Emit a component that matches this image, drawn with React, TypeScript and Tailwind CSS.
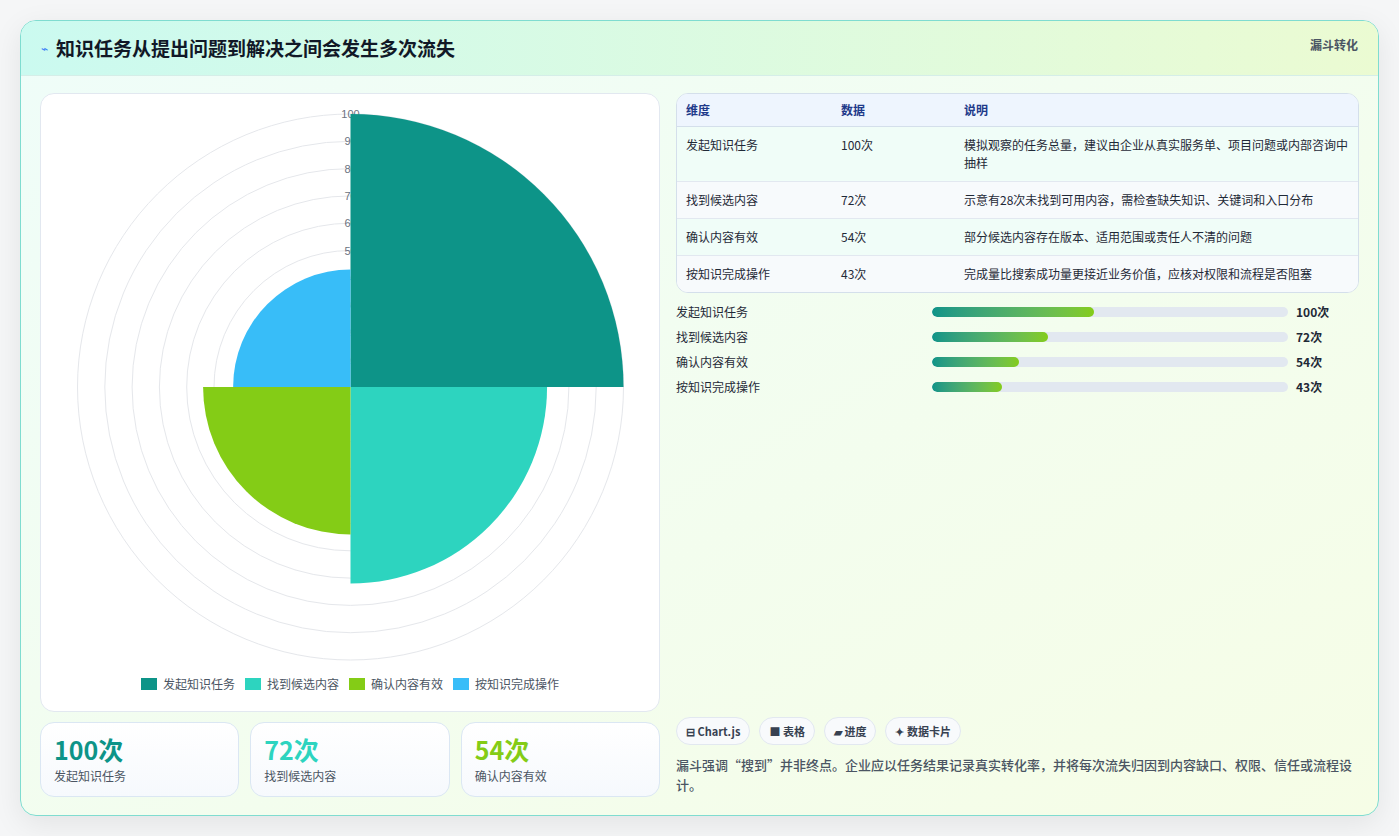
import React from "react";

const F = { fontFamily: '"Noto Sans CJK SC", "Noto Sans", sans-serif' };
const rows = [
  ["发起知识任务", "100次", "模拟观察的任务总量，建议由企业从真实服务单、项目问题或内部咨询中抽样"],
  ["找到候选内容", "72次", "示意有28次未找到可用内容，需检查缺失知识、关键词和入口分布"],
  ["确认内容有效", "54次", "部分候选内容存在版本、适用范围或责任人不清的问题"],
  ["按知识完成操作", "43次", "完成量比搜索成功量更接近业务价值，应核对权限和流程是否阻塞"],
];
const vals = [100, 72, 54, 43];
const cols = ["#0d9488", "#2dd4bf", "#84cc16", "#38bdf8"];

function Chart() {
  const cx = 309.5, cy = 293, R = 273;
  const r = (v: number) => (v / 100) * R;
  const wedge = (i: number) => {
    const rr = r(vals[i]);
    const pts = [
      [cx, cy - rr, cx + rr, cy],
      [cx + rr, cy, cx, cy + rr],
      [cx, cy + rr, cx - rr, cy],
      [cx - rr, cy, cx, cy - rr],
    ][i];
    return `M${cx},${cy} L${pts[0]},${pts[1]} A${rr},${rr} 0 0 1 ${pts[2]},${pts[3]} Z`;
  };
  return (
    <svg width="619" height="575" viewBox="0 0 619 575">
      {[10, 20, 30, 40, 50, 60, 70, 80, 90, 100].map((v) => (
        <circle key={v} cx={cx} cy={cy} r={r(v)} fill="none" stroke="#e5e7eb" strokeWidth="1" />
      ))}
      {[10, 20, 30, 40, 50, 60, 70, 80, 90, 100].map((v) => (
        <text key={v} x={cx} y={cy - r(v) + 4} textAnchor="middle" fontSize="11" fill="#6b7280" fontFamily="Liberation Sans, sans-serif">{v}</text>
      ))}
      {[0, 1, 2, 3].map((i) => (
        <path key={i} d={wedge(i)} fill={cols[i]} />
      ))}
    </svg>
  );
}

export default function App() {
  return (
    <div className="w-[1399px] h-[836px] bg-[#f5f6f7] pt-[20px] pl-[20px]" style={F}>
      <div className="w-[1359px] h-[796px] rounded-[16px] border border-[#7fdcd0] overflow-hidden bg-gradient-to-br from-[#effdf9] to-[#f6fde6] shadow-[0_8px_30px_rgba(0,0,0,0.08)] flex flex-col">
        <div className="h-[55px] shrink-0 flex items-center justify-between px-[20px] bg-gradient-to-r from-[#cbfaf0] to-[#ebfbd2] border-b border-[#d5eee8]">
          <div className="flex items-center gap-[8px]">
            <span className="text-[#3b82f6] text-[12px]">⌁</span>
            <span className="text-[19px] font-bold text-[#111827]">知识任务从提出问题到解决之间会发生多次流失</span>
          </div>
          <span className="text-[12px] font-bold text-[#4b5563] self-start mt-[15px]">漏斗转化</span>
        </div>
        <div className="flex-1 flex gap-[16px] px-[19px] pt-[17px]">
          <div className="w-[620px] flex flex-col gap-[10px]">
            <div className="h-[619px] bg-white rounded-[14px] border border-[#e2e8f0] flex flex-col items-center">
              <Chart />
              <div className="flex gap-[10px] text-[12px] text-[#4b5563] mt-[6px]">
                {rows.map((rw, i) => (
                  <div key={i} className="flex items-center gap-[6px]">
                    <span className="w-[16px] h-[12px]" style={{ background: cols[i] }} />
                    {rw[0]}
                  </div>
                ))}
              </div>
            </div>
            <div className="grid grid-cols-3 gap-[11px]">
              {[0, 1, 2].map((i) => (
                <div key={i} className="h-[75px] rounded-[14px] border border-[#dbe7f3] bg-gradient-to-b from-white to-[#f6f9fd] px-[13px] pt-[10px]">
                  <div className="text-[25px] font-bold leading-[32px]" style={{ color: cols[i] }}>{rows[i][1]}</div>
                  <div className="text-[12px] text-[#4b5563] mt-[2px]">{rows[i][0]}</div>
                </div>
              ))}
            </div>
          </div>
          <div className="flex-1 flex flex-col">
            <div className="rounded-[12px] border border-[#d4dfeb] overflow-hidden bg-white text-[12px] text-[#1f2937]">
              <div className="flex bg-[#eef5fe] h-[33px] items-center border-b border-[#d4dfeb] text-[#1e3a8a] font-bold">
                <div className="w-[164px] pl-[9px]">维度</div>
                <div className="w-[123px]">数据</div>
                <div className="flex-1">说明</div>
              </div>
              {rows.map((rw, i) => (
                <div key={i} className={`flex py-[9px] leading-[18px] ${i % 2 ? "bg-[#f7fafc]" : "bg-[#f0fdf8]"} ${i < 3 ? "border-b border-[#e2e8f0]" : ""}`}>
                  <div className="w-[164px] pl-[9px]">{rw[0]}</div>
                  <div className="w-[123px]">{rw[1]}</div>
                  <div className="flex-1 pr-[8px]">{rw[2]}</div>
                </div>
              ))}
            </div>
            <div className="mt-[10px] flex flex-col gap-[7px]">
              {rows.map((rw, i) => (
                <div key={i} className="flex items-center h-[18px] text-[12px]">
                  <div className="w-[256px] text-[#1f2937]">{rw[0]}</div>
                  <div className="w-[356px] h-[10px] rounded-full bg-[#e2e8f0] overflow-hidden">
                    <div className="h-full rounded-full bg-gradient-to-r from-[#0d9488] to-[#84cc16]" style={{ width: `${[45.5, 32.5, 24.5, 19.7][i]}%` }} />
                  </div>
                  <div className="ml-[8px] font-bold text-[#1f2937]">{rw[1]}</div>
                </div>
              ))}
            </div>
            <div className="flex-1" />
            <div className="flex gap-[9px] text-[11px] font-bold text-[#374151]">
              {["⊟ Chart.js", "■ 表格", "▰ 进度", "✦ 数据卡片"].map((c) => (
                <span key={c} className="h-[28px] px-[9px] flex items-center rounded-full border border-[#e2e8f0] bg-[#f8fafc]">{c}</span>
              ))}
            </div>
            <div className="mt-[10px] mb-[20px] text-[13px] leading-[20px] font-medium text-[#4b5563]">
              漏斗强调“搜到”并非终点。企业应以任务结果记录真实转化率，并将每次流失归因到内容缺口、权限、信任或流程设计。
            </div>
          </div>
        </div>
      </div>
    </div>
  );
}
